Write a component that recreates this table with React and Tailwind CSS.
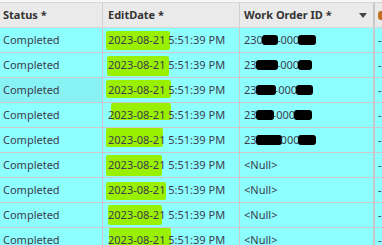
const rows = [
  { id: [["230", 16], ["-000", 18]], hl: [3, 64, 3, 19] },
  { id: [["23", 22], ["-000", 14]], hl: [4, 62, 3, 20] },
  { id: [["23", 20], ["-000", 17]], hl: [3, 65, 2, 18] },
  { id: [["23", 18], ["-000", 18]], hl: [8, 60, 0, 17] },
  { id: [["23", 26], ["000", 18]], hl: [3, 57, 0, 19] },
  { id: null, hl: [3, 56, 2, 21] },
  { id: null, hl: [3, 60, 4, 18] },
  { id: null, hl: [5, 54, 2, 20] },
  { id: null, hl: [6, 62, 0, 20] },
];

function Blob({ w }) {
  return <span className="inline-block h-[10px] bg-black rounded-[3px] align-middle -mx-[1px]" style={{ width: w }} />;
}

export default function App() {
  return (
    <div
      className="w-[382px] h-[245px] overflow-hidden bg-[#f6f6f6] text-[11px] text-[#3c3c4e]"
      style={{ fontFamily: '"Segoe UI", "Noto Sans", sans-serif' }}
    >
      <div className="mt-[2px] grid grid-cols-[103px_137px_135px_1fr] h-[26px] bg-[#eaeaea] border-t border-b border-[#d6d6d6] font-bold text-[#333]">
        <div className="flex items-center pl-[3px] border-r border-[#d0d0d0]">Status *</div>
        <div className="flex items-center pl-[5px] border-r border-[#d0d0d0]">EditDate *</div>
        <div className="flex items-center justify-between pl-[4px] pr-[6px] border-r-2 border-[#c8c8c8]">
          <span>Work Order ID *</span>
          <svg width="8" height="5" viewBox="0 0 8 5"><path d="M0 0h8L4 5z" fill="#444" /></svg>
        </div>
        <div className="flex items-center pl-[3px]">
          <span className="inline-block w-[6px] h-[9px] rounded-full bg-[#c07020]" />
        </div>
      </div>
      {rows.map((r, i) => (
        <div key={i} className="grid grid-cols-[103px_137px_135px_1fr] h-[25px] bg-[#8effff] border-b border-[#d2c8cc]">
          <div className={`flex items-center pl-[3px] border-r border-[#d2c8cc] ${i === 2 ? "bg-[#88f2f4]" : ""}`}>Completed</div>
          <div className="relative flex items-center pl-[5px] border-r border-[#d2c8cc]">
            <span
              className="absolute bg-[#99f000] rounded-[2px]"
              style={{ left: r.hl[0], width: r.hl[1], top: r.hl[2], height: r.hl[3] }}
            />
            <span className="relative">2023-08-21 5:51:39 PM</span>
          </div>
          <div className="flex items-center pl-[4px] border-r-2 border-[#c8c8c8] whitespace-nowrap">
            {r.id ? (
              r.id.map(([t, w], j) => (
                <span key={j} className="flex items-center">
                  <span>{t}</span>
                  <Blob w={w} />
                </span>
              ))
            ) : (
              <span>&lt;Null&gt;</span>
            )}
          </div>
          <div className="flex items-center pl-[3px]">-</div>
        </div>
      ))}
    </div>
  );
}
